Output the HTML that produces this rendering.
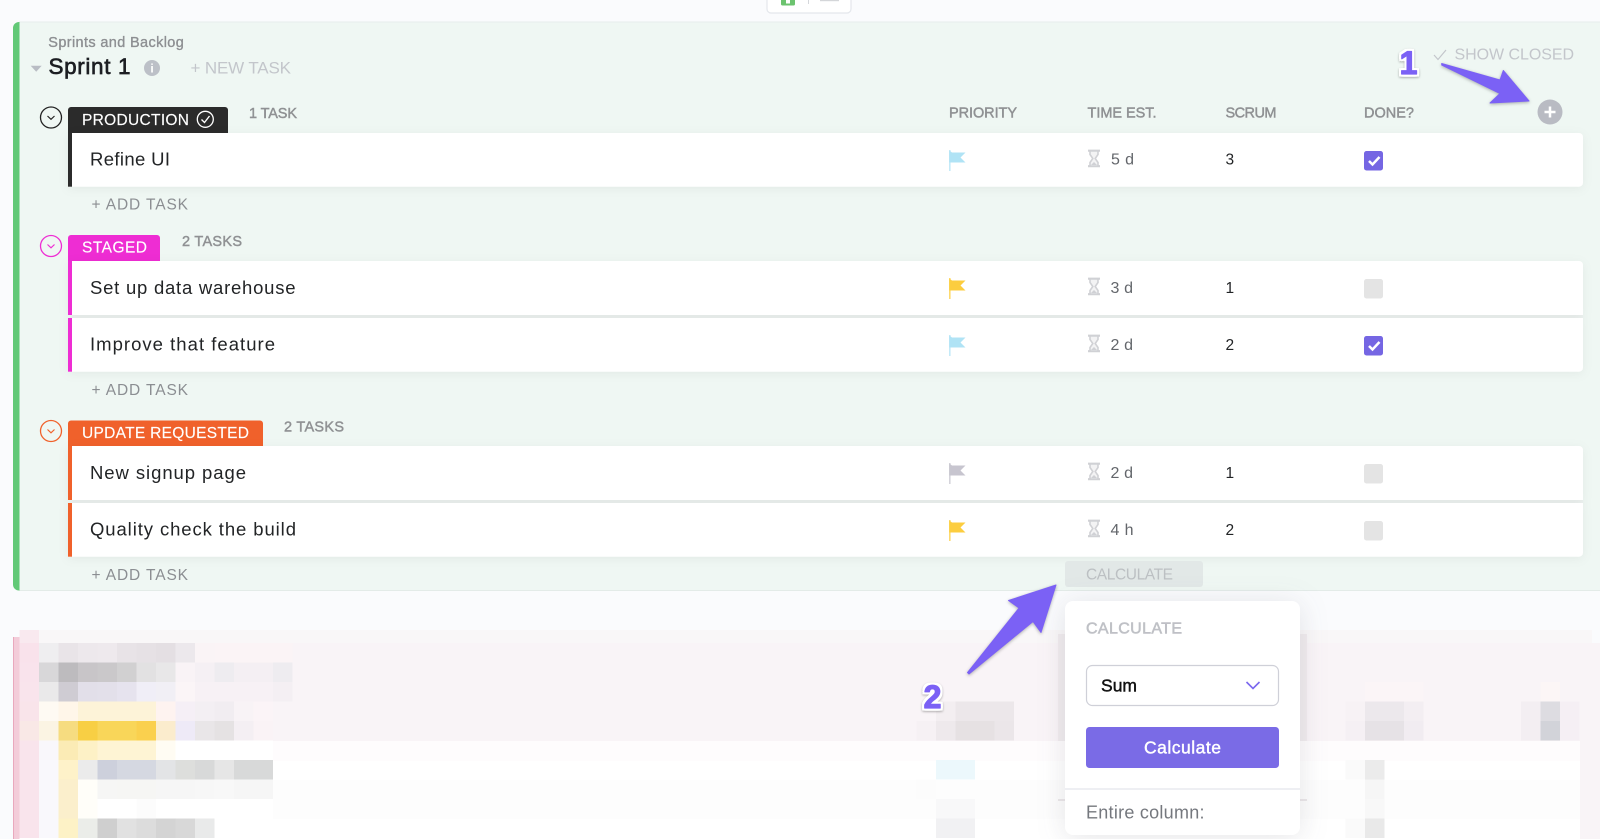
<!DOCTYPE html>
<html><head><meta charset="utf-8"><title>Sprint 1</title>
<style>
html,body{margin:0;padding:0;width:1600px;height:839px;overflow:hidden;background:#fafbfd}
svg{display:block;font-family:"Liberation Sans",sans-serif}
.mo rect{width:1px;height:1px}
.h{font-size:14.5px;fill:#8f9193;stroke:#8f9193;stroke-width:.45}
.add{font-size:15.500px;fill:#8b8e92}
.task{font-size:18.500px;fill:#222426}
.tag{font-size:15.5px;fill:#fff;stroke:#fff;stroke-width:.15}
.est{font-size:16px;fill:#63666b}
.sc{font-size:15.5px;fill:#222426}
.rows{filter:drop-shadow(0 2px 5px rgba(0,0,0,.05))}
.ann{font-size:32px;font-weight:700;fill:#7b61f5;stroke:#7b61f5;stroke-width:1.2px;stroke-linejoin:round;filter:drop-shadow(2px 0 0 #fff) drop-shadow(-2px 0 0 #fff) drop-shadow(0 2px 0 #fff) drop-shadow(0 -2px 0 #fff) drop-shadow(0 1px 1px rgba(0,0,0,.3))}
.arr{fill:#7b61f5;stroke:#7b61f5;stroke-width:1;stroke-linejoin:round;filter:drop-shadow(0 1.5px 1.5px rgba(0,0,0,.3))}
</style></head><body>
<svg width="1600" height="839" viewBox="0 0 1600 839" xmlns="http://www.w3.org/2000/svg">
<defs>
<symbol id="hg" overflow="visible"><path d="M1088 17.7h12M1088 33.2h12" stroke="#d0d1d5" stroke-width="2.200" fill="none"/><path d="M1090 18v3.500l2.800 4-2.800 4v3.500h8v-3.500l-2.800-4 2.800-4v-3.500z" fill="#f3f3f4" stroke="#d0d1d5" stroke-width="1.600"/><path d="M1091 32l3-3 3 3z" fill="#d0d1d5"/></symbol>
<symbol id="fl" overflow="visible"><path d="M949.3 17.5L952 19.5H965.5L960.5 24.5L965.5 29.5H949.3Z"/><rect x="949" y="17" width="1.6" height="21" opacity=".75"/></symbol>
<symbol id="cbon" overflow="visible"><rect x="1364" y="18" width="19" height="19.5" rx="2.5" fill="#7566e3"/><path d="M1369 28l3.500 3.500 7-7.500" fill="none" stroke="#fff" stroke-width="2.500"/></symbol>
<symbol id="cboff" overflow="visible"><rect x="1364" y="18" width="19" height="19.5" rx="2.5" fill="#e4e4e4"/></symbol>
</defs>

<!-- top button -->
<path d="M767 0v9a4 4 0 0 0 4 4h76a4 4 0 0 0 4-4V0" fill="#fff" stroke="#e4e7ec" stroke-width="1.2"/>
<path d="M781 0h14v4a1.500 1.500 0 0 1-1.500 1.500h-11A1.500 1.500 0 0 1 781 4z" fill="#6cc36f"/><rect x="786" y="0" width="4" height="3.500" fill="#fff"/>
<rect x="808" y="0" width="1" height="4" fill="#d5d7db"/>
<rect x="820" y="0" width="19" height="1.200" fill="#d4d6d9"/>

<!-- blurred list -->
<g shape-rendering="crispEdges">
<rect x="39" y="630" width="1553" height="13" fill="#f9f7f8"/>
<rect x="19.500" y="643" width="1580.500" height="98" fill="#f9f4f7"/>
<rect x="19.500" y="741" width="1560.500" height="98" fill="#fff"/>
<rect x="1580" y="741" width="20" height="98" fill="#f9f4f7"/>
<rect x="39" y="741" width="1541" height="20" fill="#fefcfd"/>
<rect x="273" y="780" width="1307" height="39" fill="#fdfdfd"/>
<rect x="13" y="637" width="6.500" height="202" fill="#f3ccd9"/>
<rect x="13" y="637" width="1.200" height="202" fill="#e9a8bd"/>
<g class="mo" transform="translate(0 643) scale(19.5)">
<rect x="1" y="-.67" fill="#f9e9ef" style="height:.67px"/>
<rect x="1" y="0" fill="#f9e2eb"/><rect x="2" y="0" fill="#efeef0"/><rect x="3" y="0" fill="#e9e4e8"/><rect x="4" y="0" fill="#ede8ec"/><rect x="5" y="0" fill="#eee9ed"/><rect x="6" y="0" fill="#e8e3e7"/><rect x="7" y="0" fill="#e6e1e5"/><rect x="8" y="0" fill="#e4dfe3"/><rect x="9" y="0" fill="#ece8ec"/><rect x="10" y="0" fill="#faf4f6"/><rect x="11" y="0" fill="#fbf4f6"/><rect x="12" y="0" fill="#fbf4f6"/><rect x="13" y="0" fill="#fbf4f6"/><rect x="14" y="0" fill="#fbf4f6"/>
<rect x="1" y="1" fill="#f9e3ec"/><rect x="2" y="1" fill="#d8d7d9"/><rect x="3" y="1" fill="#bdbbbe"/><rect x="4" y="1" fill="#c8c5c8"/><rect x="5" y="1" fill="#cac8ca"/><rect x="6" y="1" fill="#d1d0d1"/><rect x="7" y="1" fill="#e2e1e2"/><rect x="8" y="1" fill="#e8e7e8"/><rect x="9" y="1" fill="#f9f3f6"/><rect x="10" y="1" fill="#f5f0f4"/><rect x="11" y="1" fill="#eeecf0"/><rect x="12" y="1" fill="#f4eff3"/><rect x="13" y="1" fill="#f4eff3"/><rect x="14" y="1" fill="#eeecf0"/>
<rect x="1" y="2" fill="#f9e4ec"/><rect x="2" y="2" fill="#eae9ea"/><rect x="3" y="2" fill="#cfccd3"/><rect x="4" y="2" fill="#e2dfe9"/><rect x="5" y="2" fill="#e3e0ea"/><rect x="6" y="2" fill="#e6e3ee"/><rect x="7" y="2" fill="#f0eef7"/><rect x="8" y="2" fill="#f1eff5"/><rect x="9" y="2" fill="#fbf5f7"/><rect x="10" y="2" fill="#f7f1f5"/><rect x="11" y="2" fill="#f7f1f5"/><rect x="12" y="2" fill="#f7f1f5"/><rect x="13" y="2" fill="#f7f1f5"/><rect x="14" y="2" fill="#f4eff3"/>
<rect x="1" y="3" fill="#f9e4ea"/><rect x="2" y="3" fill="#fefaf3"/><rect x="3" y="3" fill="#fff6e9"/><rect x="4" y="3" fill="#fdf3d8"/><rect x="5" y="3" fill="#fdf3d8"/><rect x="6" y="3" fill="#fdf3d8"/><rect x="7" y="3" fill="#fdf3d8"/><rect x="8" y="3" fill="#fef3f0"/><rect x="9" y="3" fill="#f5eff6"/><rect x="10" y="3" fill="#f3eff3"/><rect x="11" y="3" fill="#f1edf1"/><rect x="12" y="3" fill="#f8f3f6"/><rect x="13" y="3" fill="#fbf4f7"/>
<rect x="1" y="4" fill="#f9e8e6"/><rect x="2" y="4" fill="#fbf4e3"/><rect x="3" y="4" fill="#f6dc80"/><rect x="4" y="4" fill="#f8cf44"/><rect x="5" y="4" fill="#f9d659"/><rect x="6" y="4" fill="#f9d659"/><rect x="7" y="4" fill="#fad04e"/><rect x="8" y="4" fill="#fbeccd"/><rect x="9" y="4" fill="#eeeaf7"/><rect x="10" y="4" fill="#e9e6e8"/><rect x="11" y="4" fill="#e5e2e3"/><rect x="12" y="4" fill="#f4eff3"/><rect x="13" y="4" fill="#faf3f6"/>
<rect x="1" y="5" fill="#f9e4ec"/><rect x="2" y="5" fill="#f9f7fb"/><rect x="3" y="5" fill="#fbebb5"/><rect x="4" y="5" fill="#fdf1c6"/><rect x="5" y="5" fill="#fef4d4"/><rect x="6" y="5" fill="#fef4d4"/><rect x="7" y="5" fill="#fef4d4"/><rect x="8" y="5" fill="#fffcf3"/><rect x="9" y="5" fill="#fff"/><rect x="10" y="5" fill="#fff"/><rect x="11" y="5" fill="#fff"/><rect x="12" y="5" fill="#fff"/><rect x="13" y="5" fill="#fff"/>
<rect x="1" y="6" fill="#f9e4ec"/><rect x="2" y="6" fill="#f9f8fc"/><rect x="3" y="6" fill="#fef2c9"/><rect x="4" y="6" fill="#ebebeb"/><rect x="5" y="6" fill="#cdd0dc"/><rect x="6" y="6" fill="#d5d8e1"/><rect x="7" y="6" fill="#d5d8e1"/><rect x="8" y="6" fill="#e3e4e6"/><rect x="9" y="6" fill="#dddedc"/><rect x="10" y="6" fill="#d8d9d9"/><rect x="11" y="6" fill="#e6e6e6"/><rect x="12" y="6" fill="#d8d9d9"/><rect x="13" y="6" fill="#d8d9d9"/>
<rect x="1" y="7" fill="#f9e4ec"/><rect x="2" y="7" fill="#f9f8fc"/><rect x="3" y="7" fill="#fbefcc"/><rect x="4" y="7" fill="#fffef9"/><rect x="5" y="7" fill="#f6f6f5"/><rect x="6" y="7" fill="#f6f6f4"/><rect x="7" y="7" fill="#f6f6f4"/><rect x="8" y="7" fill="#f6f6f6"/><rect x="9" y="7" fill="#f6f6f6"/><rect x="10" y="7" fill="#f7f7f7"/><rect x="11" y="7" fill="#f8f8f8"/><rect x="12" y="7" fill="#f6f6f6"/><rect x="13" y="7" fill="#f6f6f6"/>
<rect x="1" y="8" fill="#f9e4ec"/><rect x="2" y="8" fill="#f9f8fc"/><rect x="3" y="8" fill="#fbefcc"/><rect x="4" y="8" fill="#fffef9"/><rect x="5" y="8" fill="#fff"/><rect x="6" y="8" fill="#fff"/><rect x="7" y="8" fill="#fcfcfc"/><rect x="8" y="8" fill="#fff"/><rect x="9" y="8" fill="#fff"/><rect x="10" y="8" fill="#fff"/><rect x="11" y="8" fill="#fff"/><rect x="12" y="8" fill="#fff"/><rect x="13" y="8" fill="#fff"/>
<rect x="1" y="9" fill="#f9e4ec"/><rect x="2" y="9" fill="#f9f8fc"/><rect x="3" y="9" fill="#fdf2c6"/><rect x="4" y="9" fill="#ebede9"/><rect x="5" y="9" fill="#cfcfcf"/><rect x="6" y="9" fill="#e1e1e1"/><rect x="7" y="9" fill="#dcdcdc"/><rect x="8" y="9" fill="#d4d4d4"/><rect x="9" y="9" fill="#d8d8d8"/><rect x="10" y="9" fill="#e9eaea"/>
<!-- middle -->
<rect x="48" y="3" fill="#f3eef1"/><rect x="49" y="3" fill="#ece7ea"/><rect x="50" y="3" fill="#ece7ea"/><rect x="51" y="3" fill="#ece7ea"/>
<rect x="47" y="4" fill="#f6f1f4"/><rect x="48" y="4" fill="#eee9ec"/><rect x="49" y="4" fill="#e6e1e3"/><rect x="50" y="4" fill="#e6e1e3"/><rect x="51" y="4" fill="#ebe6e9"/>
<rect x="48" y="6" fill="#ecf8fc"/><rect x="49" y="6" fill="#ecf8fc"/>
<rect x="47" y="7" fill="#fcfcfc"/><rect x="48" y="8" fill="#f8f8f9"/><rect x="49" y="8" fill="#f8f8f9"/>
<rect x="48" y="9" fill="#f1f1f3"/><rect x="49" y="9" fill="#f1f1f3"/>
<!-- right -->
<rect x="70" y="2" fill="#fbf5f7"/><rect x="71" y="2" fill="#fbf5f7"/><rect x="72" y="2" fill="#fbf5f7"/><rect x="79" y="2" fill="#fcf6f6"/>
<rect x="69" y="3" fill="#f7f2f5"/><rect x="70" y="3" fill="#ece8ec"/><rect x="71" y="3" fill="#ece8ec"/><rect x="72" y="3" fill="#f3eef2"/><rect x="78" y="3" fill="#f3eef2"/><rect x="79" y="3" fill="#dddce1"/><rect x="80" y="3" fill="#f5eff4"/>
<rect x="69" y="4" fill="#f5f0f4"/><rect x="70" y="4" fill="#e6e2e6"/><rect x="71" y="4" fill="#e6e2e6"/><rect x="72" y="4" fill="#f1ecf1"/><rect x="78" y="4" fill="#f3eef2"/><rect x="79" y="4" fill="#d2d3d9"/><rect x="80" y="4" fill="#f5eff4"/>
<rect x="69" y="6" fill="#fafafa"/><rect x="70" y="6" fill="#ebebeb"/>
<rect x="70" y="7" fill="#f6f6f6"/><rect x="70" y="8" fill="#f8f8f8"/>
<rect x="69" y="9" fill="#fafafa"/><rect x="70" y="9" fill="#e9e9e9"/>
</g>
<rect x="1058" y="634" width="249" height="107" fill="#f1ecef"/>
<rect x="1058" y="799" width="249" height="2" fill="#ebe7e9"/>
</g>

<!-- panel -->
<path d="M19 22H1600V590.500H19A6 6 0 0 1 13 584.500V28A6 6 0 0 1 19 22Z" fill="#eff7f3"/>
<rect x="19" y="21.500" width="1581" height="1" fill="#e7ecec"/>
<rect x="19" y="590" width="1581" height="1" fill="#e3ebe8"/>
<path d="M19.500 22H19A6 6 0 0 0 13 28V584.500A6 6 0 0 0 19 590.500H19.500Z" fill="#62c977"/>

<text x="48.300" y="47" textLength="135.500" font-size="14.500" fill="#8d8f92" stroke="#8d8f92" stroke-width=".35">Sprints and Backlog</text>
<path d="M30.700 65.700H41.700L36.200 71.700Z" fill="#b9bdc4"/>
<text x="48.500" y="74" textLength="82" font-size="22.500" fill="#1c1e22" stroke="#1c1e22" stroke-width=".65">Sprint 1</text>
<circle cx="152" cy="68" r="8" fill="#bcc0c7"/><text x="152" y="72.500" text-anchor="middle" font-size="12" font-weight="700" fill="#fff">i</text>
<text x="190.500" y="73.500" textLength="100.500" font-size="17" fill="#c3c6cb">+ NEW TASK</text>

<path d="M1434 55l4 4.500 8-9.500" fill="none" stroke="#c3c6cb" stroke-width="1.200"/>
<text x="1454.500" y="59.300" textLength="119.500" font-size="16" fill="#c3c6cb">SHOW CLOSED</text>

<text x="949" y="117.500" textLength="68" class="h">PRIORITY</text>
<text x="1087.500" y="117.500" textLength="69" class="h">TIME EST.</text>
<text x="1225.500" y="117.500" textLength="51" class="h">SCRUM</text>
<text x="1364" y="117.500" textLength="50" class="h">DONE?</text>
<circle cx="1550" cy="112" r="12.500" fill="#b9bbc3"/><path d="M1544.500 112h11M1550 106.500v11" stroke="#fff" stroke-width="2.500"/>

<!-- group 1 -->
<circle cx="51" cy="117.500" r="10.500" fill="none" stroke="#222" stroke-width="1.300"/><path d="M47.500 116l3.500 3.300 3.500-3.300" fill="none" stroke="#222" stroke-width="1.200"/>
<path d="M68 133V110a3 3 0 0 1 3-3H225a3 3 0 0 1 3 3V133Z" fill="#2b2b2b"/>
<text x="82" y="125" textLength="107" class="tag">PRODUCTION</text>
<circle cx="205.300" cy="119.300" r="8" fill="none" stroke="#fff" stroke-width="1.300"/><path d="M201.500 119.500l3 3 5-6.500" fill="none" stroke="#fff" stroke-width="1.400"/>
<text x="249" y="118" textLength="48" class="h">1 TASK</text>
<g class="rows">
<path d="M68 133H1579a4 4 0 0 1 4 4V182.700a4 4 0 0 1-4 4H68Z" fill="#fff"/>
</g>
<rect x="68" y="133" width="4" height="53.700" fill="#2b2b2b"/>
<text x="90" y="165.700" textLength="80" class="task">Refine UI</text>
<use href="#fl" y="133" fill="#b0e3f5"/><use href="#hg" y="133"/>
<text x="1111" y="164.500" textLength="23" class="est">5 d</text>
<text x="1225.500" y="164.500" class="sc">3</text>
<use href="#cbon" y="133"/>
<text x="91.500" y="209.500" textLength="96.500" class="add">+ ADD TASK</text>

<!-- group 2 -->
<circle cx="51" cy="246" r="10.500" fill="none" stroke="#ee2dd3" stroke-width="1.300"/><path d="M47.500 244.500l3.500 3.300 3.500-3.300" fill="none" stroke="#ee2dd3" stroke-width="1.200"/>
<path d="M68 261V238a3 3 0 0 1 3-3H157a3 3 0 0 1 3 3V261Z" fill="#ee2dd3"/>
<text x="82" y="252.700" textLength="65" class="tag">STAGED</text>
<text x="182" y="246" textLength="60" class="h">2 TASKS</text>
<rect x="72" y="315" width="1511" height="3" fill="#eef3f1"/>
<g class="rows">
<path d="M68 261H1579a4 4 0 0 1 4 4V315H68Z" fill="#fff"/>
<path d="M68 318H1583V367.700a4 4 0 0 1-4 4H68Z" fill="#fff"/>
</g>
<rect x="68" y="261" width="4" height="54" fill="#ee2dd3"/><rect x="68" y="318" width="4" height="53.700" fill="#ee2dd3"/>
<text x="90" y="294" textLength="205.500" class="task">Set up data warehouse</text>
<text x="90" y="350.700" textLength="185" class="task">Improve that feature</text>
<use href="#fl" y="261" fill="#fccd3f"/><use href="#hg" y="261"/>
<text x="1110.500" y="293" textLength="22.500" class="est">3 d</text><text x="1225.500" y="293" class="sc">1</text><use href="#cboff" y="261"/>
<use href="#fl" y="318" fill="#b0e3f5"/><use href="#hg" y="318"/>
<text x="1110.500" y="350" textLength="22.500" class="est">2 d</text><text x="1225.500" y="350" class="sc">2</text><use href="#cbon" y="318"/>
<text x="91.500" y="395" textLength="96.500" class="add">+ ADD TASK</text>

<!-- group 3 -->
<circle cx="51" cy="431" r="10.500" fill="none" stroke="#f0612b" stroke-width="1.300"/><path d="M47.500 429.500l3.500 3.300 3.500-3.300" fill="none" stroke="#f0612b" stroke-width="1.200"/>
<path d="M68 446V423.500a3 3 0 0 1 3-3H260a3 3 0 0 1 3 3V446Z" fill="#f0612b"/>
<text x="82" y="438" textLength="167" class="tag">UPDATE REQUESTED</text>
<text x="284" y="431.300" textLength="60" class="h">2 TASKS</text>
<rect x="72" y="500" width="1511" height="3" fill="#eef3f1"/>
<g class="rows">
<path d="M68 446H1579a4 4 0 0 1 4 4V500H68Z" fill="#fff"/>
<path d="M68 503H1583V552.700a4 4 0 0 1-4 4H68Z" fill="#fff"/>
</g>
<rect x="68" y="446" width="4" height="54" fill="#f0612b"/><rect x="68" y="503" width="4" height="53.700" fill="#f0612b"/>
<text x="90" y="479" textLength="156" class="task">New signup page</text>
<text x="90" y="535.700" textLength="206" class="task">Quality check the build</text>
<use href="#fl" y="446" fill="#c7c5cf"/><use href="#hg" y="446"/>
<text x="1110.500" y="478" textLength="22.500" class="est">2 d</text><text x="1225.500" y="478" class="sc">1</text><use href="#cboff" y="446"/>
<use href="#fl" y="503" fill="#fccd3f"/><use href="#hg" y="503"/>
<text x="1110.500" y="535" textLength="23" class="est">4 h</text><text x="1225.500" y="535" class="sc">2</text><use href="#cboff" y="503"/>
<text x="91.500" y="580" textLength="96.500" class="add">+ ADD TASK</text>

<!-- calculate -->
<rect x="1065" y="561" width="138" height="26" rx="3" fill="#e2e8e7"/>
<text x="1086" y="579.300" textLength="87" font-size="15.500" fill="#bcc0c3">CALCULATE</text>
<rect x="1065" y="601" width="235" height="234" rx="8" fill="#fff" style="filter:drop-shadow(0 3px 14px rgba(60,60,80,.13))"/>
<text x="1086" y="633.300" textLength="96" font-size="16" fill="#bfc1c6" stroke="#bfc1c6" stroke-width=".55">CALCULATE</text>
<rect x="1086.500" y="665.500" width="192" height="40" rx="6" fill="#fff" stroke="#cfd0d8" stroke-width="1.200"/>
<text x="1101" y="691.300" textLength="36" font-size="17.500" fill="#111" stroke="#111" stroke-width=".45">Sum</text>
<path d="M1246.500 682l6.500 6.500 6.500-6.500" fill="none" stroke="#7b68ee" stroke-width="1.600"/>
<rect x="1086" y="727" width="193" height="41" rx="3.500" fill="#7a6be6"/>
<text x="1144" y="753.300" textLength="77" font-size="17.500" fill="#fff" stroke="#fff" stroke-width=".4">Calculate</text>
<rect x="1065" y="788" width="235" height="2" fill="#eeeff3"/>
<text x="1086" y="818.300" textLength="118.500" font-size="18" fill="#75787e">Entire column:</text>

<!-- annotations -->
<path class="arr" d="M1441.700 63.500L1500 80L1503.300 70.500L1529 101L1490 103L1500 93.500L1441.700 65Z"/>
<text x="1408.500" y="74" text-anchor="middle" class="ann">1</text>
<path class="arr" d="M1056 585L1041 632.500L1033 621.500L969 674L967.500 672.500L1019 608L1008.500 600.500Z"/>
<text x="932.500" y="708" text-anchor="middle" class="ann">2</text>
</svg>
</body></html>
